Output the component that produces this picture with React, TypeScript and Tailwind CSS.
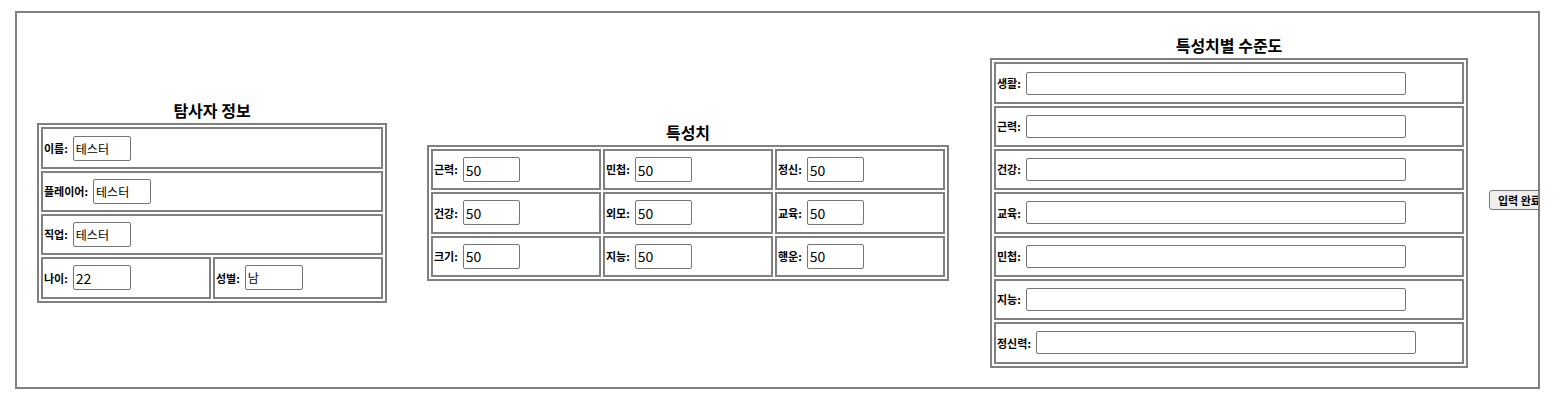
import React from "react";

const FONT = "font-['Noto_Sans_CJK_KR','Noto_Sans',sans-serif]";

type Field = { label: string; value: string; wide?: boolean };

const investigator: Field[] = [
  { label: "이름", value: "테스터", wide: true },
  { label: "플레이어", value: "테스터", wide: true },
  { label: "직업", value: "테스터", wide: true },
  { label: "나이", value: "22" },
  { label: "성별", value: "남" },
];

const stats: Field[] = [
  { label: "근력", value: "50" },
  { label: "민첩", value: "50" },
  { label: "정신", value: "50" },
  { label: "건강", value: "50" },
  { label: "외모", value: "50" },
  { label: "교육", value: "50" },
  { label: "크기", value: "50" },
  { label: "지능", value: "50" },
  { label: "행운", value: "50" },
];

const levels = ["생활", "근력", "건강", "교육", "민첩", "지능", "정신력"];

function Cell({ label, value, inputClass }: { label: string; value: string; inputClass: string }) {
  const numeric = /^\d+$/.test(value);
  return (
    <div className="h-[41.3px] border-2 border-[#808080] flex items-center pl-[1px] gap-[5px]">
      <span className="text-[11px] font-bold text-black whitespace-nowrap">{label}:</span>
      <input
        readOnly
        defaultValue={value}
        className={`${inputClass} border border-[#767676] rounded-[2px] px-[2px] text-black outline-none ${
          numeric ? "text-[14px]" : "text-[12px]"
        }`}
      />
    </div>
  );
}

function Title({ children }: { children: React.ReactNode }) {
  return <h3 className="text-[16px] font-bold leading-[26px] text-center text-black">{children}</h3>;
}

export default function App() {
  return (
    <div className={`${FONT} bg-white w-[1561px] h-[402px] pt-[11px] pl-[15px]`}>
      <div className="w-[1525px] h-[378px] border-2 border-[#808080] flex items-center overflow-hidden">
        {/* 탐사자 정보 */}
        <section className="ml-[20px] w-[350px] shrink-0">
          <Title>탐사자 정보</Title>
          <div className="grid grid-cols-2 gap-[2px] p-[2px] border-2 border-[#808080]">
            {investigator.map((f) => (
              <div key={f.label} className={f.wide ? "col-span-2" : ""}>
                <Cell label={f.label} value={f.value} inputClass="w-[58px] h-[25px]" />
              </div>
            ))}
          </div>
        </section>

        {/* 특성치 */}
        <section className="ml-[40px] w-[522px] shrink-0">
          <Title>특성치</Title>
          <div className="grid grid-cols-3 gap-[2px] p-[2px] border-2 border-[#808080]">
            {stats.map((f) => (
              <Cell key={f.label} label={f.label} value={f.value} inputClass="w-[57px] h-[25px]" />
            ))}
          </div>
        </section>

        {/* 특성치별 수준도 */}
        <section className="ml-[41px] w-[478px] shrink-0">
          <Title>특성치별 수준도</Title>
          <div className="flex flex-col gap-[2px] p-[2px] border-2 border-[#808080]">
            {levels.map((l) => (
              <Cell key={l} label={l} value="" inputClass="w-[380px] h-[23px]" />
            ))}
          </div>
        </section>

        <button className="ml-[21px] shrink-0 h-[20px] px-[8px] text-[11px] font-bold text-black bg-[#efefef] border border-[#767676] rounded-[3px] whitespace-nowrap leading-none">
          입력 완료
        </button>
      </div>
    </div>
  );
}
